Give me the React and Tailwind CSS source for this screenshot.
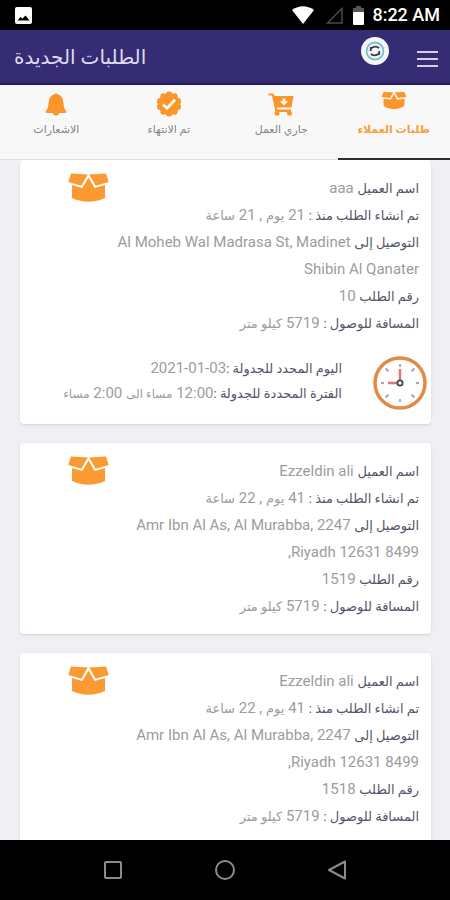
import React from "react";

function BoxIcon({ className }) {
  return (
    <svg viewBox="0 0 41 30" className={className} fill="currentColor" aria-hidden="true">
      <path d="M3 0.500 L19.800 1.500 L13.300 12.700 L0.300 9 Z" />
      <path d="M38 0.500 L21.200 1.500 L27.700 12.700 L40.700 9 Z" />
      <path d="M4 12 L14.300 15 L20.500 4.500 L26.700 15 L37 12 V25 Q20.500 32.500 4 25 Z" />
    </svg>
  );
}

function SmallBoxIcon({ className }) {
  return (
    <svg viewBox="0 0 26 19" className={className} fill="currentColor" aria-hidden="true">
      <path d="M2.500 1 L12.300 1.300 L9 7 L0.500 6 Z" />
      <path d="M23.500 1 L13.700 1.300 L17 7 L25.500 6 Z" />
      <path d="M2.500 7.500 L9.800 8.700 L13 3 L16.200 8.700 L23.500 7.500 V14 Q23 16 20 16.800 Q13 19.500 6 16.800 Q3 16 2.500 14 Z" />
    </svg>
  );
}

function CartIcon({ className }) {
  return (
    <svg viewBox="0 0 26 23" className={className} fill="currentColor" aria-hidden="true">
      <path
        fillRule="evenodd"
        d="M0.500 0.500 H5.500 L6.500 3 H25.500 L23.500 14.500 H9 L9.500 16.500 H23 V19 H7.500 L4 2.500 H0.500 Z M14.500 5.500 V8.300 H12 L16 12.500 L20 8.300 H17.500 V5.500 Z"
      />
      <circle cx="9" cy="20.300" r="2.500" />
      <circle cx="21.500" cy="20.300" r="2.500" />
    </svg>
  );
}

function BellIcon({ className }) {
  return (
    <svg viewBox="0 0 22 23" className={className} fill="currentColor" aria-hidden="true">
      <path d="M11 0.500 Q12.500 0.500 13 1.500 Q18 3 18.300 9 Q18.500 15.500 21.500 18.500 Q21.500 20 20 20 H14.500 Q13.500 22.700 11 22.700 Q8.500 22.700 7.500 20 H2 Q0.500 20 0.500 18.500 Q3.500 15.500 3.700 9 Q4 3 9 1.500 Q9.500 0.500 11 0.500 Z" />
    </svg>
  );
}

function SealIcon({ className }) {
  const lobes = Array.from({ length: 10 }, (_, i) => (i * Math.PI) / 5);
  return (
    <svg viewBox="0 0 26 26" className={className} aria-hidden="true">
      <g fill="currentColor">
        <circle cx="13" cy="13" r="10.800" />
        {lobes.map((angle) => (
          <circle key={angle} cx={13 + 9.3 * Math.sin(angle)} cy={13 - 9.3 * Math.cos(angle)} r="3.200" />
        ))}
      </g>
      <path d="M7 13.500 L11 17.300 L19 8.700" fill="none" stroke="#f8f8f8" strokeWidth="2.800" />
    </svg>
  );
}

function ClockIcon({ className }) {
  return (
    <svg viewBox="0 0 54 54" className={className} fill="none" aria-hidden="true">
      <circle cx="27" cy="27" r="25" stroke="#e08c48" strokeWidth="3.500" />
      <g stroke="#a3a8b6" strokeWidth="1.800">
        <path d="M27 8 V11 M27 43 V46 M8 27 H11 M43 27 H46" />
        <path d="M12.500 12.500 L15.500 15.500 M38.500 38.500 L41.500 41.500 M12.500 41.500 L15.500 38.500 M38.500 15.500 L41.500 12.500" />
      </g>
      <path d="M27 13 V24 M15 27 H24" stroke="#e8746c" strokeWidth="2.400" />
      <circle cx="27" cy="27" r="2.600" stroke="#3f4560" strokeWidth="1.800" fill="#fff" />
    </svg>
  );
}

function StatusBar() {
  return (
    <div className="flex h-[30px] shrink-0 items-center bg-black pl-[15px] pr-[10px] text-white">
      <svg viewBox="0 0 17 17" className="size-[17px]" aria-hidden="true">
        <rect width="17" height="17" rx="2" fill="#fff" />
        <path d="M2.500 13.500 L5.500 10 L7.500 11.500 L10.500 8.500 L14.500 13.500 Z" fill="#000" />
      </svg>
      <div className="ml-auto flex items-center">
        <svg viewBox="0 0 22 18" className="h-[18px] w-[22px]" aria-hidden="true">
          <path d="M0 4 Q11 -3.500 22 4 L11 18 Z" fill="#fff" />
        </svg>
        <svg viewBox="0 0 17 17" className="ml-3 size-[17px]" aria-hidden="true">
          <path d="M16 1.500 V16 H1.500 Z" fill="none" stroke="#4a4a4a" strokeWidth="1.500" />
        </svg>
        <svg viewBox="0 0 11 19" className="ml-[10px] h-[19px] w-[11px]" aria-hidden="true">
          <path d="M3 0 H8 V2 H11 V7 H0 V2 H3 Z" fill="#555" />
          <rect y="6" width="11" height="13" rx="1" fill="#fff" />
        </svg>
        <span className="ml-2 whitespace-nowrap text-[18px] font-medium leading-6">8:22 AM</span>
      </div>
    </div>
  );
}

function AppBar() {
  return (
    <header className="flex h-[55px] shrink-0 items-center border-b-2 border-[#241a5c] bg-[#352c74] pl-[14px] pr-3">
      <h1 dir="rtl" className="text-[20px] leading-8 text-[#dedaf0]">الطلبات الجديدة</h1>
      <button type="button" aria-label="تحديث" className="mb-3 ml-auto">
        <svg viewBox="0 0 28 28" className="size-7" fill="none" aria-hidden="true">
          <circle cx="14" cy="14" r="14" fill="#f4f8fa" />
          <circle cx="14" cy="14" r="8.500" stroke="#7dbccb" strokeWidth="1.800" />
          <path d="M9.800 14 V10 M9.800 11.500 Q14 8 18.200 11 M18.200 14 V18 M18.200 16.500 Q14 20 9.800 17" stroke="#3c3a40" strokeWidth="1.800" />
        </svg>
      </button>
      <button type="button" aria-label="القائمة" className="ml-7 mt-1 flex w-[21px] flex-col gap-[5px]">
        <span className="h-[2px] bg-[#d5d0ea]" />
        <span className="h-[2px] bg-[#d5d0ea]" />
        <span className="h-[2px] bg-[#d5d0ea]" />
      </button>
    </header>
  );
}

const tabs = [
  { label: "طلبات العملاء", icon: <SmallBoxIcon className="mb-2 h-[19px] w-[26px]" />, active: true },
  { label: "جاري العمل", icon: <CartIcon className="h-[23px] w-[26px]" /> },
  { label: "تم الانتهاء", icon: <SealIcon className="size-[26px]" /> },
  { label: "الاشعارات", icon: <BellIcon className="h-[23px] w-[22px]" /> },
];

function Tabs() {
  return (
    <nav dir="rtl" className="grid h-[75px] shrink-0 grid-cols-4 bg-[#f8f8f8]">
      {tabs.map((tab) => (
        <button
          key={tab.label}
          type="button"
          aria-current={tab.active ? "page" : undefined}
          className={
            tab.active
              ? "flex flex-col items-center border-b-2 border-[#2b2b33] pt-[6px] text-[#f7a13d]"
              : "flex flex-col items-center border-b border-[#dddddf] pt-[6px] text-[#85858c]"
          }
        >
          <span className="flex h-[26px] items-center text-[#fb962b]">{tab.icon}</span>
          <span className={tab.active ? "mt-1 text-[11px] font-bold leading-[18px]" : "mt-1 text-[11px] leading-[18px]"}>
            {tab.label}
          </span>
        </button>
      ))}
    </nav>
  );
}

function Field({ label, children }) {
  return (
    <p>
      <span className="text-[13px] text-[#55556a]">{label}</span> {children}
    </p>
  );
}

function OrderCard({ order }) {
  return (
    <article dir="rtl" className="rounded-[4px] bg-white pb-[14px] pt-[15px] shadow-sm">
      <div className="flex items-start pl-12 pr-3">
        <div className="min-w-0 flex-1 text-[15px] leading-[27px] text-[#9c9ca0]">
          <Field label="اسم العميل">{order.name}</Field>
          <Field label="تم انشاء الطلب منذ :">
            {order.days} <span className="text-[13px]">يوم</span> , {order.hours} <span className="text-[13px]">ساعة</span>
          </Field>
          <Field label="التوصيل إلى">{order.street}</Field>
          <p>{order.city}</p>
          <Field label="رقم الطلب">{order.number}</Field>
          <Field label="المسافة للوصول :">
            {order.distance} <span className="text-[13px]">كيلو متر</span>
          </Field>
        </div>
        <BoxIcon className="-mt-[2px] h-[30px] w-[41px] text-[#fb9a33]" />
      </div>
      {order.date && (
        <div className="mt-[19px] flex items-start gap-[31px] pr-1">
          <ClockIcon className="size-[54px] shrink-0" />
          <div className="text-[15px] leading-6 text-[#9c9ca0]">
            <p>
              <span className="text-[13px] text-[#55556a]">اليوم المحدد للجدولة :</span>
              <bdi dir="ltr">{order.date}</bdi>
            </p>
            <p>
              <span className="text-[13px] text-[#55556a]">الفترة المحددة للجدولة :</span>
              {order.from} <span className="text-[12px]">مساء الى</span> {order.to} <span className="text-[12px]">مساء</span>
            </p>
          </div>
        </div>
      )}
    </article>
  );
}

const orders = [
  {
    name: "aaa",
    days: 21,
    hours: 21,
    street: "Al Moheb Wal Madrasa St, Madinet",
    city: "Shibin Al Qanater",
    number: "10",
    distance: "5719",
    date: "2021-01-03",
    from: "12:00",
    to: "2:00",
  },
  {
    name: "Ezzeldin ali",
    days: 41,
    hours: 22,
    street: "Amr Ibn Al As, Al Murabba, 2247",
    city: "Riyadh 12631 8499,",
    number: "1519",
    distance: "5719",
  },
  {
    name: "Ezzeldin ali",
    days: 41,
    hours: 22,
    street: "Amr Ibn Al As, Al Murabba, 2247",
    city: "Riyadh 12631 8499,",
    number: "1518",
    distance: "5719",
  },
];

function NavBar() {
  return (
    <footer className="flex h-[60px] shrink-0 items-center justify-center gap-[92px] bg-black text-[#8c8c8c]">
      <button type="button" aria-label="التطبيقات الأخيرة">
        <svg viewBox="0 0 20 20" className="size-5" fill="none" stroke="currentColor" strokeWidth="2" aria-hidden="true">
          <rect x="2" y="2" width="16" height="16" rx="1" />
        </svg>
      </button>
      <button type="button" aria-label="الرئيسية">
        <svg viewBox="0 0 20 20" className="size-5" fill="none" stroke="currentColor" strokeWidth="2" aria-hidden="true">
          <circle cx="10" cy="10" r="9" />
        </svg>
      </button>
      <button type="button" aria-label="رجوع">
        <svg viewBox="0 0 20 20" className="size-5" fill="none" stroke="currentColor" strokeWidth="2" strokeLinejoin="round" aria-hidden="true">
          <path d="M18 1.500 V18.500 L2 10 Z" />
        </svg>
      </button>
    </footer>
  );
}

export default function App() {
  return (
    <div className="flex h-dvh flex-col overflow-hidden bg-[#efeff4] font-[Roboto,'DejaVu_Sans',sans-serif]">
      <StatusBar />
      <AppBar />
      <Tabs />
      <main className="flex min-h-0 flex-1 flex-col gap-[19px] overflow-hidden pl-5 pr-[19px] [&>*]:shrink-0">
        {orders.map((order) => (
          <OrderCard key={order.number} order={order} />
        ))}
      </main>
      <NavBar />
    </div>
  );
}
